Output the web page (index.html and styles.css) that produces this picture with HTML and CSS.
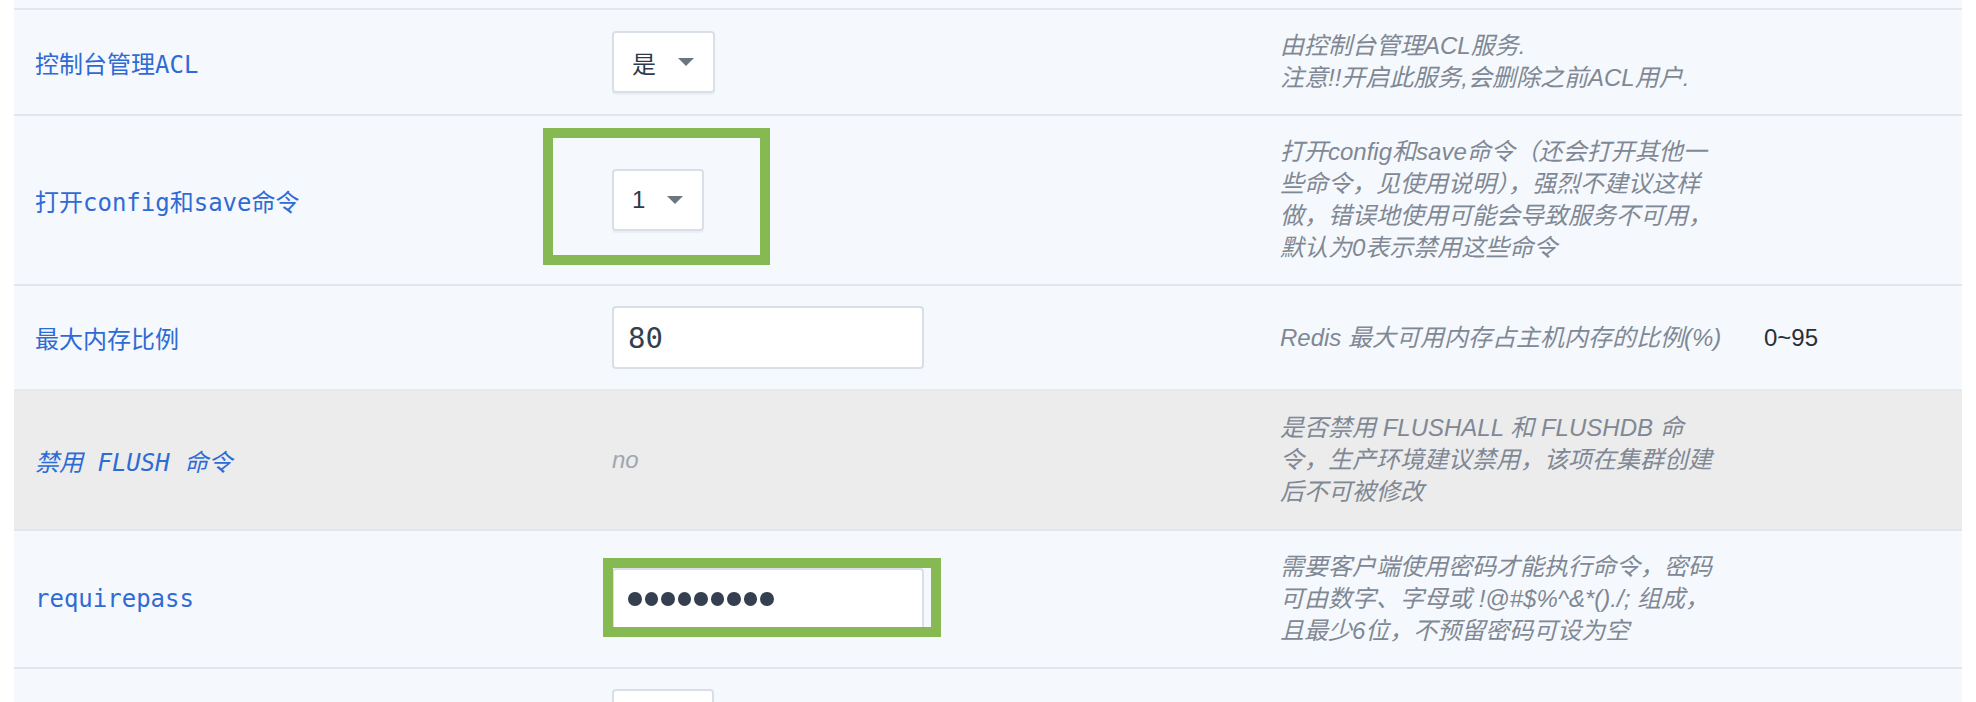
FILE: index.html
```html
<!DOCTYPE html>
<html lang="zh-CN">
<head>
<meta charset="utf-8">
<title>参数配置</title>
<link rel="stylesheet" href="styles.css">
</head>
<body>
<div class="table">
  <div class="row-tail"></div>

  <div class="row">
    <div class="label">控制台管理ACL</div>
    <div class="control">
      <div class="select"><span class="select-value">是</span><span class="caret"></span></div>
    </div>
    <div class="desc">
      <p>由控制台管理ACL服务.</p>
      <p>注意!!开启此服务,会删除之前ACL用户.</p>
    </div>
    <div class="range"></div>
  </div>

  <div class="row">
    <div class="label">打开config和save命令</div>
    <div class="control">
      <div class="mark-wrap">
        <div class="select"><span class="select-value">1</span><span class="caret"></span></div>
        <div class="mark mark-select"></div>
      </div>
    </div>
    <div class="desc">
      <p>打开config和save命令（还会打开其他一</p>
      <p>些命令，见使用说明），强烈不建议这样</p>
      <p>做，错误地使用可能会导致服务不可用，</p>
      <p>默认为0表示禁用这些命令</p>
    </div>
    <div class="range"></div>
  </div>

  <div class="row">
    <div class="label">最大内存比例</div>
    <div class="control">
      <div class="input"><span class="input-value">80</span></div>
    </div>
    <div class="desc">
      <p>Redis 最大可用内存占主机内存的比例(%)</p>
    </div>
    <div class="range">0~95</div>
  </div>

  <div class="row row-disabled">
    <div class="label label-italic">禁用 FLUSH 命令</div>
    <div class="control">
      <span class="static-value">no</span>
    </div>
    <div class="desc">
      <p>是否禁用 FLUSHALL 和 FLUSHDB 命</p>
      <p>令，生产环境建议禁用，该项在集群创建</p>
      <p>后不可被修改</p>
    </div>
    <div class="range"></div>
  </div>

  <div class="row">
    <div class="label">requirepass</div>
    <div class="control">
      <div class="mark-wrap">
        <div class="input" aria-label="password">
          <span class="dots"><i></i><i></i><i></i><i></i><i></i><i></i><i></i><i></i><i></i></span>
        </div>
        <div class="mark mark-input"></div>
      </div>
    </div>
    <div class="desc">
      <p>需要客户端使用密码才能执行命令，密码</p>
      <p>可由数字、字母或 !@#$%^&amp;*()./; 组成，</p>
      <p>且最少6位，不预留密码可设为空</p>
    </div>
    <div class="range"></div>
  </div>

  <div class="row">
    <div class="label"></div>
    <div class="control">
      <div class="select select-blank"><span class="caret"></span></div>
    </div>
    <div class="desc"></div>
    <div class="range"></div>
  </div>
</div>
</body>
</html>
```
FILE: styles.css
```css
html, body {
  margin: 0;
  padding: 0;
  background: #ffffff;
}

body {
  font-family: "Liberation Sans", "Noto Sans CJK SC", sans-serif;
}

.table {
  margin: 0 14px;
  background: #f5f8fc;
}

.row-tail {
  height: 8px;
}

.row {
  display: grid;
  grid-template-columns: 577px 668px 484px 1fr;
  align-items: center;
  padding: 20px 0 20px 21px;
  border-top: 2px solid #e3e7ed;
}

.row-disabled {
  background: #ececec;
  border-top-color: #e9eaec;
  padding-top: 21px;
  padding-bottom: 21px;
}

.label {
  font-family: "DejaVu Sans Mono", "Noto Sans CJK SC", monospace;
  font-size: 24px;
  color: #2f6bd4;
  white-space: nowrap;
}

.label-italic {
  font-style: italic;
}

.control {
  display: flex;
  align-items: center;
}

.mark-wrap {
  position: relative;
  display: inline-flex;
}

.select {
  display: inline-flex;
  align-items: center;
  gap: 22px;
  height: 62px;
  box-sizing: border-box;
  padding: 0 19px 0 18px;
  background: #ffffff;
  border: 2px solid #d9dfe7;
  border-radius: 4px;
  box-shadow: 0 2px 1px rgba(30, 50, 80, 0.05);
  font-family: "Liberation Sans", "Noto Sans CJK SC", sans-serif;
  font-size: 24px;
  color: #2e3a4a;
}

.select-blank {
  width: 102px;
  justify-content: flex-end;
}

.caret {
  width: 0;
  height: 0;
  border-left: 8px solid transparent;
  border-right: 8px solid transparent;
  border-top: 8px solid #6c7582;
}

.input {
  display: flex;
  align-items: center;
  width: 312px;
  height: 63px;
  box-sizing: border-box;
  padding: 0 14px;
  background: #ffffff;
  border: 2px solid #d9dfe7;
  border-radius: 4px;
}

.input-value {
  font-family: "DejaVu Sans Mono", monospace;
  font-size: 29px;
  color: #34404f;
}

.dots {
  display: flex;
  gap: 3px;
}

.dots i {
  display: block;
  width: 13.5px;
  height: 14px;
  border-radius: 50%;
  background: #344050;
}

.static-value {
  font-family: "Liberation Sans", sans-serif;
  font-style: italic;
  font-size: 24px;
  color: #a0a7b0;
}

.desc {
  font-family: "Liberation Sans", "Noto Sans CJK SC", sans-serif;
  font-style: italic;
  font-size: 24px;
  color: #7f8894;
}

.desc p {
  margin: 0;
  line-height: 32px;
  white-space: nowrap;
}

.range {
  font-family: "Liberation Sans", sans-serif;
  font-size: 24px;
  color: #2a2f36;
}

.mark {
  position: absolute;
  box-sizing: border-box;
  border: 10px solid #87b953;
  pointer-events: none;
}

.mark-select {
  left: -69px;
  top: -41px;
  width: 227px;
  height: 137px;
}

.mark-input {
  left: -9px;
  top: -10px;
  width: 338px;
  height: 79px;
}
```
